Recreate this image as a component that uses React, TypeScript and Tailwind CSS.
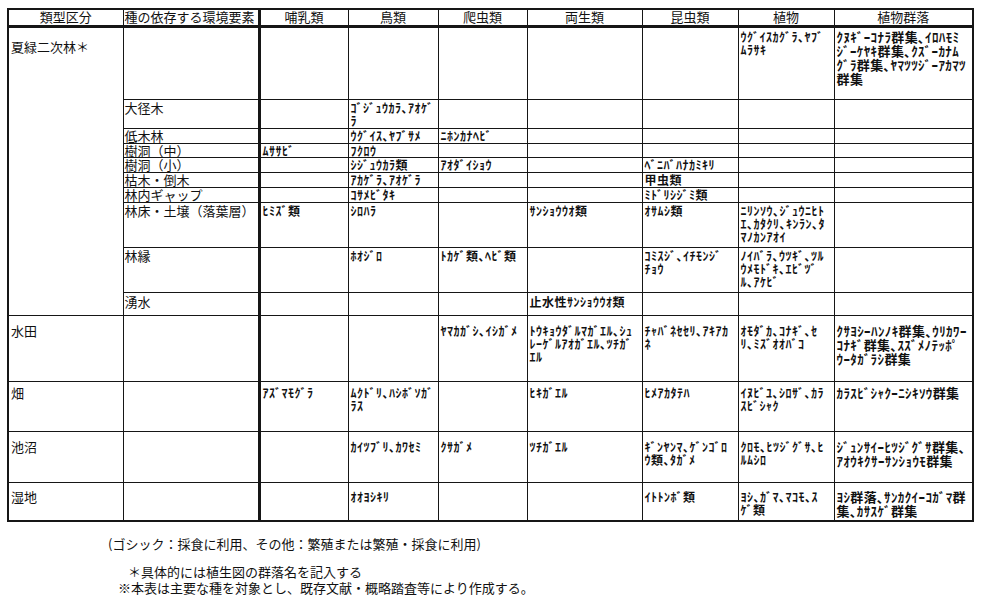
import React from 'react';

type Row = {
  env: string;
  h: string;
  pt: string;
  cells: string[];
};

// 哺乳類, 鳥類, 爬虫類, 両生類, 昆虫類, 植物, 植物群落
const forestRows: Row[] = [
  {
    env: '',
    h: 'h-[73px]',
    pt: 'pt-[2px]',
    cells: [
      '',
      '',
      '',
      '',
      '',
      'ｳｸﾞｲｽｶｸﾞﾗ､ﾔﾌﾞ\nﾑﾗｻｷ',
      'ｸﾇｷﾞｰｺﾅﾗ群集､ｲﾛﾊﾓﾐ\nｼﾞｰｹﾔｷ群集､ｸｽﾞｰｶﾅﾑ\nｸﾞﾗ群集､ﾔﾏﾂﾂｼﾞｰｱｶﾏﾂ\n群集',
    ],
  },
  { env: '大径木', h: 'h-[29px]', pt: 'pt-[1px]', cells: ['', 'ｺﾞｼﾞｭｳｶﾗ､ｱｵｹﾞ\nﾗ', '', '', '', '', ''] },
  { env: '低木林', h: 'h-[15px]', pt: 'pt-0', cells: ['', 'ｳｸﾞｲｽ､ﾔﾌﾞｻﾒ', 'ﾆﾎﾝｶﾅﾍﾋﾞ', '', '', '', ''] },
  { env: '樹洞（中）', h: 'h-[14px]', pt: 'pt-0', cells: ['ﾑｻｻﾋﾞ', 'ﾌｸﾛｳ', '', '', '', '', ''] },
  { env: '樹洞（小）', h: 'h-[15px]', pt: 'pt-0', cells: ['', 'ｼｼﾞｭｳｶﾗ類', 'ｱｵﾀﾞｲｼｮｳ', '', 'ﾍﾞﾆﾊﾞﾊﾅｶﾐｷﾘ', '', ''] },
  { env: '枯木・倒木', h: 'h-[15px]', pt: 'pt-0', cells: ['', 'ｱｶｹﾞﾗ､ｱｵｹﾞﾗ', '', '', '甲虫類', '', ''] },
  { env: '林内ギャップ', h: 'h-[15px]', pt: 'pt-0', cells: ['', 'ｺｻﾒﾋﾞﾀｷ', '', '', 'ﾐﾄﾞﾘｼｼﾞﾐ類', '', ''] },
  {
    env: '林床・土壌（落葉層）',
    h: 'h-[45px]',
    pt: 'pt-[1px]',
    cells: ['ﾋﾐｽﾞ類', 'ｼﾛﾊﾗ', '', 'ｻﾝｼｮｳｳｵ類', 'ｵｻﾑｼ類', 'ﾆﾘﾝｿｳ､ｼﾞｭｳﾆﾋﾄ\nｴ､ｶﾀｸﾘ､ｷﾝﾗﾝ､ﾀ\nﾏﾉｶﾝｱｵｲ', ''],
  },
  {
    env: '林縁',
    h: 'h-[45px]',
    pt: 'pt-[1px]',
    cells: ['', 'ﾎｵｼﾞﾛ', 'ﾄｶｹﾞ類､ﾍﾋﾞ類', '', 'ｺﾐｽｼﾞ､ｲﾁﾓﾝｼﾞ\nﾁｮｳ', 'ﾉｲﾊﾞﾗ､ｳﾂｷﾞ､ﾂﾙ\nｳﾒﾓﾄﾞｷ､ｴﾋﾞﾂﾞ\nﾙ､ｱｹﾋﾞ', ''],
  },
  { env: '湧水', h: 'h-[23px]', pt: 'pt-[2px]', cells: ['', '', '', '止水性ｻﾝｼｮｳｳｵ類', '', '', ''] },
];

const otherRows: { label: string; h: string; pt: string; cells: string[] }[] = [
  {
    label: '水田',
    h: 'h-[66px]',
    pt: 'pt-[8px]',
    cells: [
      '',
      '',
      'ﾔﾏｶｶﾞｼ､ｲｼｶﾞﾒ',
      'ﾄｳｷｮｳﾀﾞﾙﾏｶﾞｴﾙ､ｼｭ\nﾚｰｹﾞﾙｱｵｶﾞｴﾙ､ﾂﾁｶﾞ\nｴﾙ',
      'ﾁｬﾊﾞﾈｾｾﾘ､ｱｷｱｶ\nﾈ',
      'ｵﾓﾀﾞｶ､ｺﾅｷﾞ､ｾ\nﾘ､ﾐｽﾞｵｵﾊﾞｺ',
      'ｸｻﾖｼｰﾊﾝﾉｷ群集､ｳﾘｶﾜｰ\nｺﾅｷﾞ群集､ｽｽﾞﾒﾉﾃｯﾎﾟ\nｳｰﾀｶﾞﾗｼ群集',
    ],
  },
  {
    label: '畑',
    h: 'h-[50px]',
    pt: 'pt-[4px]',
    cells: ['ｱｽﾞﾏﾓｸﾞﾗ', 'ﾑｸﾄﾞﾘ､ﾊｼﾎﾞｿｶﾞ\nﾗｽ', '', 'ﾋｷｶﾞｴﾙ', 'ﾋﾒｱｶﾀﾃﾊ', 'ｲﾇﾋﾞﾕ､ｼﾛｻﾞ､ｶﾗ\nｽﾋﾞｼｬｸ', 'ｶﾗｽﾋﾞｼｬｸｰﾆｼｷｿｳ群集'],
  },
  {
    label: '池沼',
    h: 'h-[51px]',
    pt: 'pt-[8px]',
    cells: ['', 'ｶｲﾂﾌﾞﾘ､ｶﾜｾﾐ', 'ｸｻｶﾞﾒ', 'ﾂﾁｶﾞｴﾙ', 'ｷﾞﾝﾔﾝﾏ､ｹﾞﾝｺﾞﾛ\nｳ類､ﾀｶﾞﾒ', 'ｸﾛﾓ､ﾋﾂｼﾞｸﾞｻ､ﾋ\nﾙﾑｼﾛ', 'ｼﾞｭﾝｻｲｰﾋﾂｼﾞｸﾞｻ群集､\nｱｵｳｷｸｻｰｻﾝｼｮｳﾓ群集'],
  },
  {
    label: '湿地',
    h: 'h-[39px]',
    pt: 'pt-[7px]',
    cells: ['', 'ｵｵﾖｼｷﾘ', '', '', 'ｲﾄﾄﾝﾎﾞ類', 'ﾖｼ､ｶﾞﾏ､ﾏｺﾓ､ｽ\nｹﾞ類', 'ﾖｼ群落､ｻﾝｶｸｲｰｺｶﾞﾏ群\n集､ｶｻｽｹﾞ群集'],
  },
];

const headers = ['哺乳類', '鳥類', '爬虫類', '両生類', '昆虫類', '植物', '植物群落'];

const line = 'border border-[#161616]';

function DataCells({ cells, pt }: { cells: string[]; pt: string }) {
  return (
    <>
      {cells.map((c, i) => (
        <td
          key={i}
          className={`${line} align-top px-[2px] ${pt} whitespace-pre-line font-bold ${
            i === 6 ? 'text-[13px] leading-[14px] tracking-[0.4px]' : 'text-[12px] leading-[13px] tracking-[0.5px]'
          } ${i === 0 ? 'border-l-[3px] border-l-double' : ''}`}
        >
          {c}
        </td>
      ))}
    </>
  );
}

export default function App() {
  return (
    <div
      className="w-[987px] h-[600px] bg-white text-[#111] pt-[8px] pl-[7px] overflow-hidden"
      style={{ fontFamily: '"Noto Sans CJK JP", "Noto Sans", sans-serif' }}
    >
      <table className="table-fixed border-collapse border-2 border-[#161616] w-[965px]">
        <colgroup>
          <col className="w-[115px]" />
          <col className="w-[136px]" />
          <col className="w-[89px]" />
          <col className="w-[90px]" />
          <col className="w-[89px]" />
          <col className="w-[115px]" />
          <col className="w-[96px]" />
          <col className="w-[96px]" />
          <col className="w-[139px]" />
        </colgroup>
        <thead>
          <tr className="h-[17px]">
            <th className={`${line} border-b-[3px] border-b-double border-r-dashed font-normal text-[13px] leading-[14px] p-0`}>
              類型区分
            </th>
            <th className={`${line} border-b-[3px] border-b-double border-l-dashed font-normal text-[13px] leading-[14px] p-0 text-left pl-[1px]`}>
              種の依存する環境要素
            </th>
            {headers.map((h, i) => (
              <th
                key={h}
                className={`${line} border-b-[3px] border-b-double font-normal text-[13px] leading-[14px] p-0 ${
                  i === 0 ? 'border-l-[3px] border-l-double' : ''
                }`}
              >
                {h}
              </th>
            ))}
          </tr>
        </thead>
        <tbody>
          {forestRows.map((r, idx) => (
            <tr key={idx} className={r.h}>
              {idx === 0 && (
                <td
                  rowSpan={forestRows.length}
                  className={`${line} border-r-dashed align-top px-[2px] pt-[12px] text-[13px] leading-[14px]`}
                >
                  夏緑二次林＊
                </td>
              )}
              <td className={`${line} border-l-dashed align-top px-[1px] ${r.pt} text-[13px] leading-[13px] whitespace-nowrap`}>
                {r.env}
              </td>
              <DataCells cells={r.cells} pt={r.pt} />
            </tr>
          ))}
          {otherRows.map((r) => (
            <tr key={r.label} className={r.h}>
              <td className={`${line} border-r-dashed align-top px-[2px] ${r.pt} text-[13px] leading-[14px]`}>{r.label}</td>
              <td className={`${line} border-l-dashed`} />
              <DataCells cells={r.cells} pt={r.pt} />
            </tr>
          ))}
        </tbody>
      </table>

      <div className="mt-[14px] pl-[101px] text-[13px] leading-[15px]">
        (ゴシック：採食に利用、その他：繁殖または繁殖・採食に利用)
      </div>
      <div className="mt-[13px] pl-[111px] text-[13px] leading-[16px]">
        <div className="pl-[10px]">＊具体的には植生図の群落名を記入する</div>
        <div>※本表は主要な種を対象とし、既存文献・概略踏査等により作成する。</div>
      </div>
    </div>
  );
}
